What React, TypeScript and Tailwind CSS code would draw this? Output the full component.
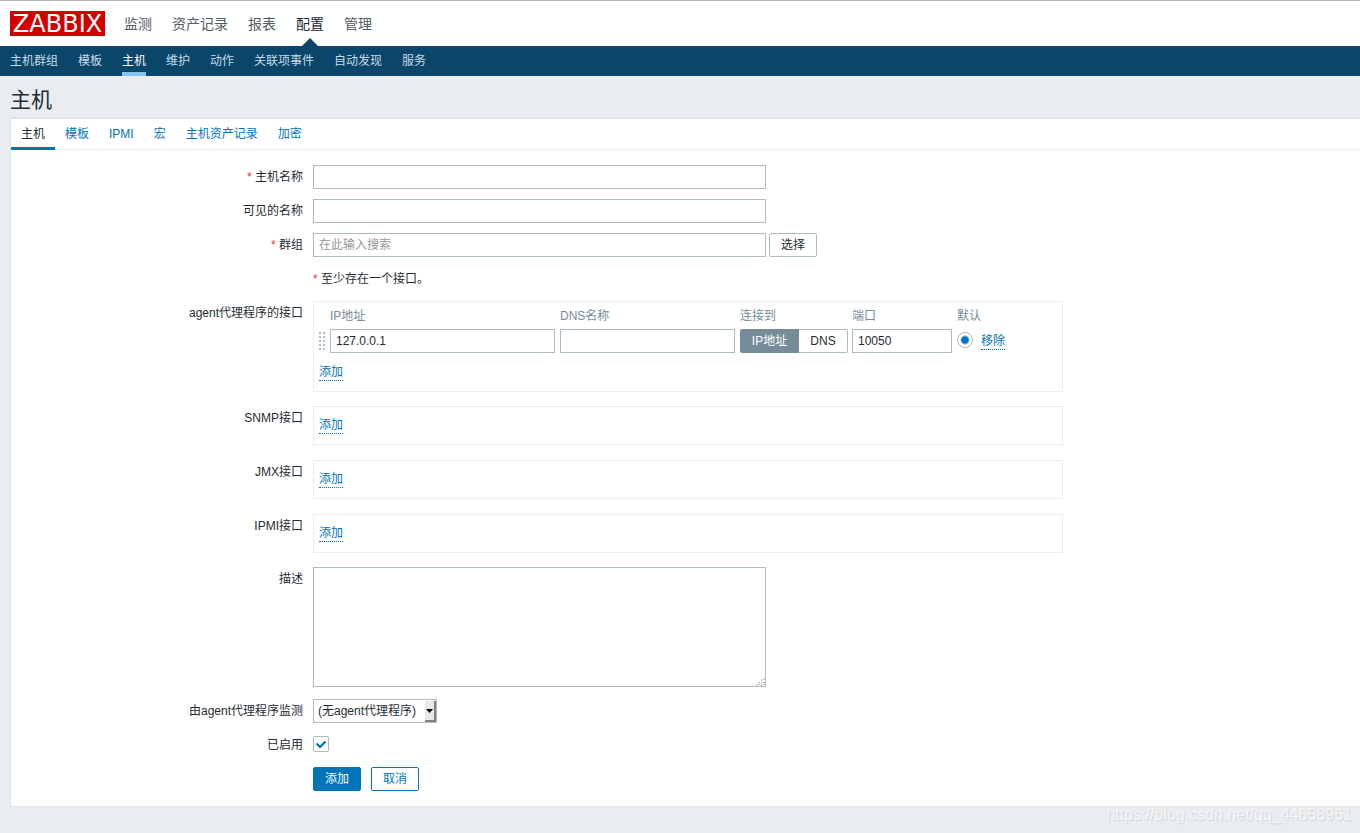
import React, { useState } from 'react';

const mainMenu = ['监测', '资产记录', '报表', '配置', '管理'];
const subMenu = ['主机群组', '模板', '主机', '维护', '动作', '关联项事件', '自动发现', '服务'];
const tabs = ['主机', '模板', 'IPMI', '宏', '主机资产记录', '加密'];

const inputClass = 'block h-6 border border-[#acbbc2] bg-white px-[5px] text-[#1f2c33] outline-none placeholder:text-[#999999] focus:border-[#0275b8]';

interface RowProps {
  label?: string;
  htmlFor?: string;
  required?: boolean;
  className?: string;
  children: React.ReactNode;
}

const Row: React.FC<RowProps> = ({ label, htmlFor, required, className = 'mt-[10px]', children }) => (
  <div className={`flex items-start ${className}`}>
    <div className="mr-[10px] w-[292px] shrink-0 text-right leading-6">
      {label && (
        <label htmlFor={htmlFor}>
          {required && <span className="text-[#e33734]">* </span>}
          {label}
        </label>
      )}
    </div>
    <div className="min-w-0">{children}</div>
  </div>
);

const DottedLink: React.FC<{ children: React.ReactNode }> = ({ children }) => (
  <a href="#" className="inline-block border-b border-dotted border-[#0275b8] leading-4 text-[#0275b8]">
    {children}
  </a>
);

const InterfaceBox: React.FC<{ children: React.ReactNode }> = ({ children }) => (
  <div className="w-[750px] border border-[#ebeef0] px-[5px]">{children}</div>
);

const DragHandle = () => (
  <svg width="7" height="18" viewBox="0 0 7 18" fill="#acbbc2" shapeRendering="crispEdges">
    {[0, 4, 8, 12, 16].map((y) => (
      <React.Fragment key={y}>
        <rect x="0" y={y} width="2" height="2" />
        <rect x="4" y={y} width="2" height="2" />
      </React.Fragment>
    ))}
  </svg>
);

const Header = () => (
  <header>
    <div className="flex h-[46px] items-center border-t border-[#b5b5b0] bg-white pl-[10px]">
      <a
        href="#"
        className="flex h-[25px] w-[95px] items-center justify-center bg-[#d40000] font-['DejaVu_Sans',sans-serif] text-2xl leading-none text-white"
      >
        ZABBIX
      </a>
      <nav className="ml-[19px] flex h-full items-center gap-5 text-sm">
        {mainMenu.map((item) => {
          const active = item === '配置';
          return (
            <a
              key={item}
              href="#"
              className={`relative flex h-full items-center ${active ? 'text-[#1f2c33]' : 'text-[#4f5d65]'}`}
            >
              {item}
              {active && (
                <svg className="absolute bottom-0 left-1/2 -translate-x-1/2" width="16" height="8" viewBox="0 0 16 8">
                  <path d="M0 8 L8 0 L16 8 Z" fill="#0a466a" />
                </svg>
              )}
            </a>
          );
        })}
      </nav>
    </div>
    <nav className="flex h-[30px] gap-5 bg-[#0a466a] pl-[10px]">
      {subMenu.map((item) => (
        <a
          key={item}
          href="#"
          className={`border-b-4 pt-[6px] leading-[18px] ${
            item === '主机' ? 'border-[#7fc6f5] text-white' : 'border-transparent text-[#c8dbe6]'
          }`}
        >
          {item}
        </a>
      ))}
    </nav>
  </header>
);

const AgentInterfaces = () => {
  const [connect, setConnect] = useState('ip');

  return (
    <InterfaceBox>
      <table className="border-collapse text-left">
        <thead className="text-[#768d99]">
          <tr className="h-[27px]">
            <th className="w-[11px]" />
            <th className="font-normal">IP地址</th>
            <th className="font-normal">DNS名称</th>
            <th className="font-normal">连接到</th>
            <th className="font-normal">端口</th>
            <th className="font-normal">默认</th>
            <th />
          </tr>
        </thead>
        <tbody>
          <tr>
            <td className="p-0 pr-1"><DragHandle /></td>
            <td className="p-0 pr-[5px]">
              <input type="text" aria-label="IP地址" defaultValue="127.0.0.1" className={`${inputClass} w-[225px]`} />
            </td>
            <td className="p-0 pr-[5px]">
              <input type="text" aria-label="DNS名称" className={`${inputClass} w-[175px]`} />
            </td>
            <td className="p-0 pr-1">
              <div className="flex h-6">
                <button
                  type="button"
                  onClick={() => setConnect('ip')}
                  className={`w-[59px] rounded-l-xs border ${connect === 'ip' ? 'border-[#768d99] bg-[#768d99] text-white' : 'border-[#acbbc2]'}`}
                >
                  IP地址
                </button>
                <button
                  type="button"
                  onClick={() => setConnect('dns')}
                  className={`w-[49px] rounded-r-xs border border-l-0 ${connect === 'dns' ? 'border-[#768d99] bg-[#768d99] text-white' : 'border-[#acbbc2]'}`}
                >
                  DNS
                </button>
              </div>
            </td>
            <td className="p-0 pr-[5px]">
              <input type="text" aria-label="端口" defaultValue="10050" className={`${inputClass} w-[100px]`} />
            </td>
            <td className="p-0 pr-2 pb-[2px]">
              <input
                type="radio"
                aria-label="默认"
                defaultChecked
                className="block size-4 appearance-none rounded-full border border-[#acbbc2] bg-white checked:bg-[radial-gradient(circle,#0275b8_3px,white_5px)]"
              />
            </td>
            <td className="p-0">
              <div className="flex"><DottedLink>移除</DottedLink></div>
            </td>
          </tr>
        </tbody>
      </table>
      <div className="flex pt-[11px] pb-[10px]">
        <DottedLink>添加</DottedLink>
      </div>
    </InterfaceBox>
  );
};

const EmptyInterfaces = () => (
  <InterfaceBox>
    <div className="flex pt-[10px] pb-[10px]">
      <DottedLink>添加</DottedLink>
    </div>
  </InterfaceBox>
);

const HostForm = () => (
  <form className="pt-[15px] pb-[15px]" onSubmit={(e) => e.preventDefault()}>
    <Row label="主机名称" htmlFor="host" required className="">
      <input id="host" type="text" className={`${inputClass} w-[453px]`} />
    </Row>
    <Row label="可见的名称" htmlFor="visiblename">
      <input id="visiblename" type="text" className={`${inputClass} w-[453px]`} />
    </Row>
    <Row label="群组" htmlFor="groups" required>
      <div className="flex gap-[3px]">
        <input id="groups" type="text" placeholder="在此输入搜索" className={`${inputClass} w-[453px]`} />
        <button type="button" className="h-6 w-12 rounded-xs border border-[#acbbc2] bg-white">选择</button>
      </div>
    </Row>
    <Row>
      <p className="leading-6"><span className="text-[#e33734]">*</span> 至少存在一个接口。</p>
    </Row>
    <Row label="agent代理程序的接口">
      <AgentInterfaces />
    </Row>
    <Row label="SNMP接口" className="mt-[14px]"><EmptyInterfaces /></Row>
    <Row label="JMX接口" className="mt-[15px]"><EmptyInterfaces /></Row>
    <Row label="IPMI接口" className="mt-[15px]"><EmptyInterfaces /></Row>
    <Row label="描述" htmlFor="description" className="mt-[14px]">
      <div className="relative">
        <textarea
          id="description"
          className="block h-[120px] w-[453px] resize-none border border-[#acbbc2] bg-white px-[5px] py-1 outline-none"
        />
        <svg className="pointer-events-none absolute right-px bottom-px" width="9" height="9" viewBox="0 0 9 9" fill="#b9b9b9" shapeRendering="crispEdges">
          <path d="M7 0h1v1h-1zM5 2h1v2h-1zM7 2h2v1h-2zM2 5h2v1h-2zM5 5h1v1h-1zM7 5h2v1h-2zM0 7h1v2h-1zM2 7h2v1h-2zM5 7h1v2h-1zM7 7h2v1h-2z" />
        </svg>
      </div>
    </Row>
    <Row label="由agent代理程序监测" htmlFor="proxy" className="mt-3">
      <div className="relative">
        <select id="proxy" className="block h-6 w-[124px] appearance-none border border-[#acbbc2] bg-white pl-1 outline-none">
          <option>(无agent代理程序)</option>
        </select>
        <span className="pointer-events-none absolute top-[2px] right-px flex h-[21px] w-[11px] items-center justify-center border-r-2 border-b-2 border-[#808080] bg-[#e8e8e6]">
          <svg width="7" height="4" viewBox="0 0 7 4"><path d="M0 0h7L3.5 4z" fill="#000000" /></svg>
        </span>
      </div>
    </Row>
    <Row label="已启用" htmlFor="status">
      <div className="h-6 pt-[3px]">
        <div className="relative">
          <input
            id="status"
            type="checkbox"
            defaultChecked
            className="peer block size-4 appearance-none rounded-xs border border-[#acbbc2] bg-white"
          />
          <svg className="pointer-events-none absolute top-0 left-0 hidden peer-checked:block" width="16" height="16" viewBox="0 0 16 16" fill="none" stroke="#0275b8" strokeWidth="2.2">
            <path d="M3.5 7.5 L7 11 L12.5 5.5" />
          </svg>
        </div>
      </div>
    </Row>
    <Row>
      <div className="flex gap-[10px]">
        <button type="submit" className="h-6 w-12 rounded-xs border border-[#0275b8] bg-[#0275b8] text-white">添加</button>
        <button type="button" className="h-6 w-12 rounded-xs border border-[#0275b8] bg-white text-[#0275b8]">取消</button>
      </div>
    </Row>
  </form>
);

export default function App() {
  const [tab, setTab] = useState('主机');

  return (
    <div className="relative min-h-screen bg-[#e9edf0] font-['Liberation_Sans','Noto_Sans_CJK_SC',sans-serif] text-xs text-[#1f2c33]">
      <Header />
      <main className="pl-[10px]">
        <h1 className="pt-2 pb-[1px] text-[21px] leading-8">主机</h1>
        <div className="border-t-2 border-b border-l border-t-[#dfe4e7] border-b-[#dfe4e7] border-l-[#dfe4e7] bg-white">
          <div className="flex h-[31px] border-b border-[#ebeef0]">
            {tabs.map((item) => (
              <button
                key={item}
                type="button"
                onClick={() => setTab(item)}
                className={`h-[31px] border-b-3 px-[10px] pt-[2px] ${
                  item === tab ? 'border-[#0275b8] text-[#1f2c33]' : 'border-transparent text-[#0275b8]'
                }`}
              >
                {item}
              </button>
            ))}
          </div>
          <HostForm />
        </div>
      </main>
      <div className="pointer-events-none absolute right-2 bottom-[6px] text-base text-[#f4f6f7] [text-shadow:1px_1px_1px_#d0d3d5]">
        https://blog.csdn.net/qq_44658961
      </div>
    </div>
  );
}
